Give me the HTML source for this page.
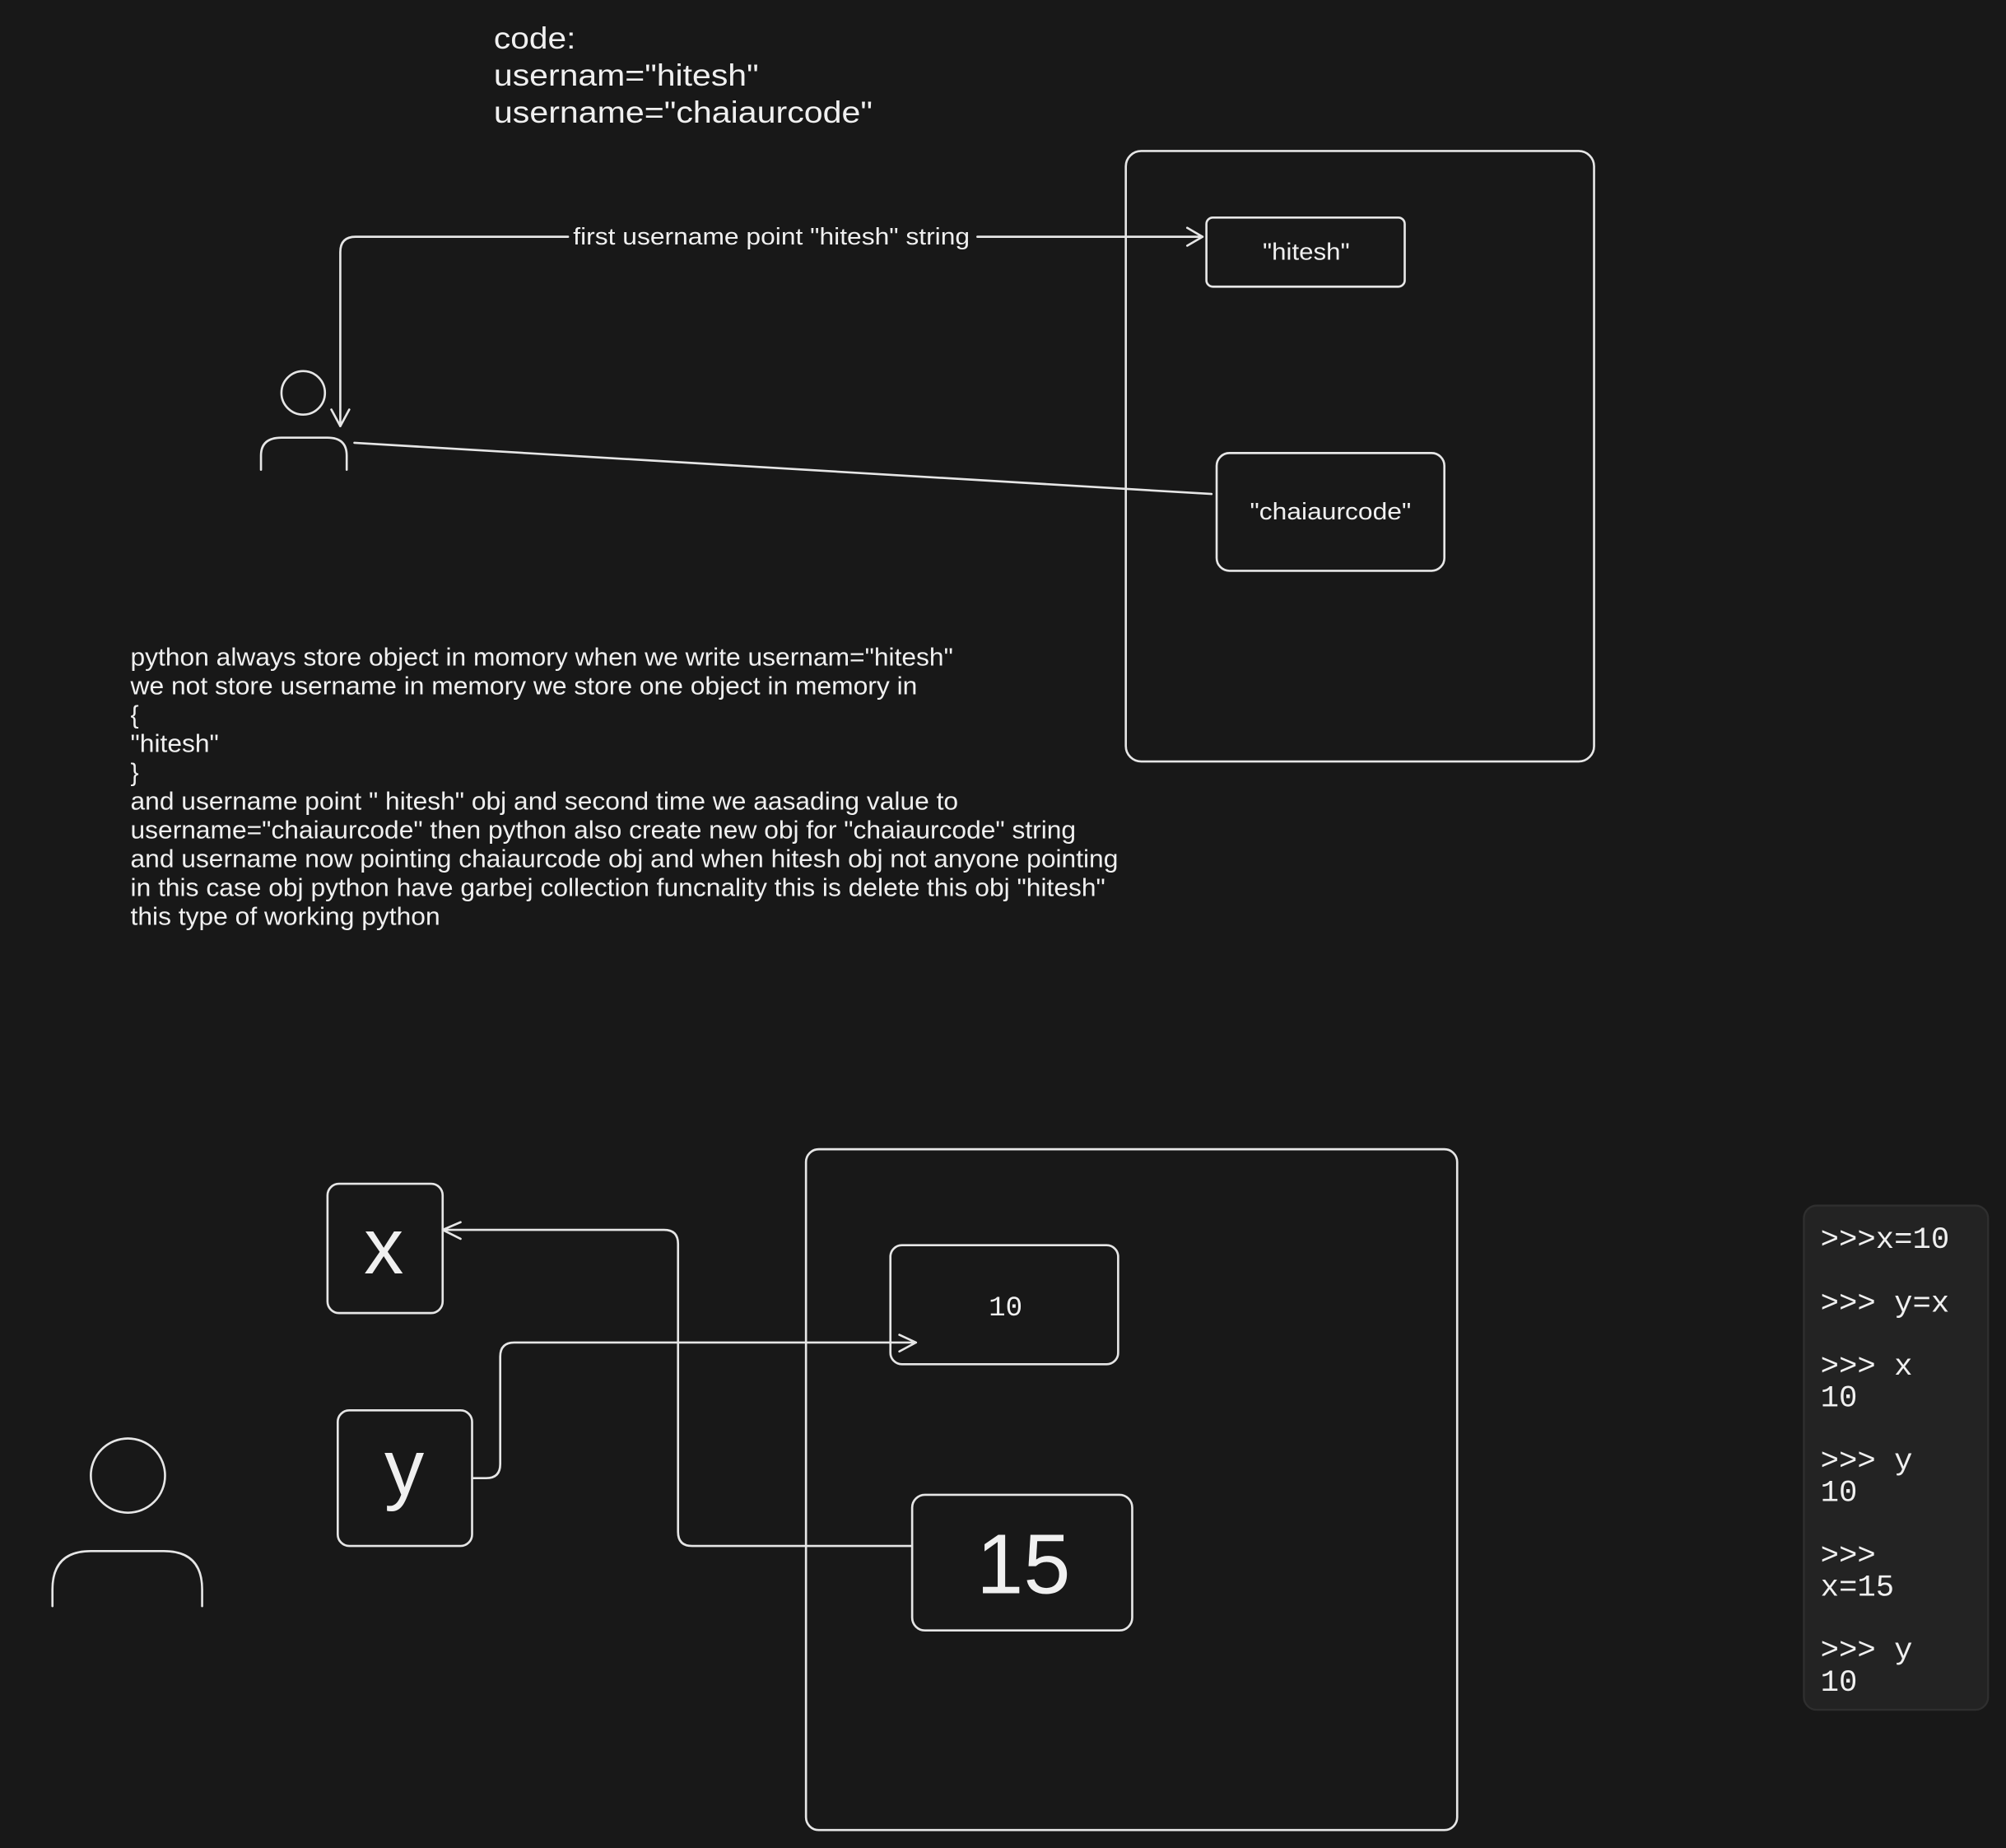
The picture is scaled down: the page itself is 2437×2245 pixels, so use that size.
<!DOCTYPE html>
<html><head><meta charset="utf-8"><style>
html,body{margin:0;padding:0;background:#181818;}
svg{display:block;}
</style></head><body>
<svg width="2437" height="2245" viewBox="0 0 1568 1444" preserveAspectRatio="none" xmlns="http://www.w3.org/2000/svg">
<rect width="1568" height="1444" fill="#181818"/>
<g fill="none" stroke="#e6e6e6" stroke-width="1.7" stroke-linecap="round" stroke-linejoin="round">
<rect x="880" y="118" width="366" height="477" rx="12"/>
<rect x="943" y="170" width="155" height="54" rx="5"/>
<rect x="951" y="354" width="178" height="92" rx="10"/>
<path d="M764,185 H940 M928,178 L940,185 L928,192"/>
<path d="M444,185 H278 Q266,185 266,197 V333 M259,320 L266,333 L273,320"/>
<circle cx="237" cy="307" r="17"/>
<path d="M204,367 V356 Q204,342 220,342 H256 Q271,342 271,356 V367"/>
<path d="M277,346 L947,386"/>
<rect x="630" y="898" width="509" height="532" rx="10"/>
<rect x="256" y="925" width="90" height="101" rx="9"/>
<rect x="264" y="1102" width="105" height="106" rx="9"/>
<rect x="696" y="973" width="178" height="93" rx="9"/>
<rect x="713" y="1168" width="172" height="106" rx="10"/>
<path d="M370,1155 H380 Q391,1155 391,1144 V1060 Q391,1049 402,1049 H716 M703,1043 L716,1049 L703,1056"/>
<path d="M712,1208 H541 Q530,1208 530,1197 V972 Q530,961 519,961 H346 M360,955 L346,961 L360,968"/>
<circle cx="100" cy="1153" r="29"/>
<path d="M41,1255 V1242 Q41,1212 71,1212 H128 Q158,1212 158,1242 V1255"/>
</g>
<g fill="#f0f0f0" font-family="Liberation Sans, sans-serif" lengthAdjust="spacingAndGlyphs">
<text x="386" y="38" font-size="24" textLength="64" lengthAdjust="spacingAndGlyphs">code:</text>
<text x="386" y="67" font-size="24" textLength="207" lengthAdjust="spacingAndGlyphs">usernam="hitesh"</text>
<text x="386" y="96" font-size="24" textLength="296" lengthAdjust="spacingAndGlyphs">username="chaiaurcode"</text>
<text x="448" y="191" font-size="18.5" textLength="310" lengthAdjust="spacingAndGlyphs">first username point "hitesh" string</text>
<text x="987" y="203" font-size="18.5" textLength="68" lengthAdjust="spacingAndGlyphs">"hitesh"</text>
<text x="977" y="406" font-size="18.5" textLength="126" lengthAdjust="spacingAndGlyphs">"chaiaurcode"</text>
<g font-size="19.5">
<text x="102" y="520" textLength="643" lengthAdjust="spacingAndGlyphs">python always store object in momory when we write usernam="hitesh"</text>
<text x="102" y="542.5" textLength="615" lengthAdjust="spacingAndGlyphs">we not store username in memory we store one object in memory in</text>
<text x="102" y="565">{</text>
<text x="102" y="587.5" textLength="69" lengthAdjust="spacingAndGlyphs">"hitesh"</text>
<text x="102" y="610">}</text>
<text x="102" y="632.5" textLength="647" lengthAdjust="spacingAndGlyphs">and username point " hitesh" obj and second time we aasading value to</text>
<text x="102" y="655" textLength="739" lengthAdjust="spacingAndGlyphs">username="chaiaurcode" then python also create new obj for "chaiaurcode" string</text>
<text x="102" y="677.5" textLength="772" lengthAdjust="spacingAndGlyphs">and username now pointing chaiaurcode obj and when hitesh obj not anyone pointing</text>
<text x="102" y="700" textLength="762" lengthAdjust="spacingAndGlyphs">in this case obj python have garbej collection funcnality this is delete this obj "hitesh"</text>
<text x="102" y="722.5" textLength="242" lengthAdjust="spacingAndGlyphs">this type of working python</text>
</g>
<text x="300" y="995" font-size="62" text-anchor="middle">x</text>
<text x="316" y="1168" font-size="62" text-anchor="middle">y</text>
<text x="786" y="1028" font-size="22" text-anchor="middle" font-family="Liberation Mono, monospace">10</text>
<text x="800" y="1245" font-size="66" text-anchor="middle">15</text>
</g>
<rect x="1410" y="942" width="144" height="394" rx="10" fill="#232323" stroke="#2f2f2f" stroke-width="1.5"/>
<g fill="#f0f0f0" font-family="Liberation Mono, DejaVu Sans Mono, monospace" font-size="24">
<text x="1423" y="975">&gt;&gt;&gt;x=10</text>
<text x="1423" y="1025">&gt;&gt;&gt; y=x</text>
<text x="1423" y="1074">&gt;&gt;&gt; x</text>
<text x="1423" y="1099">10</text>
<text x="1423" y="1148">&gt;&gt;&gt; y</text>
<text x="1423" y="1173">10</text>
<text x="1423" y="1222">&gt;&gt;&gt;</text>
<text x="1423" y="1247">x=15</text>
<text x="1423" y="1296">&gt;&gt;&gt; y</text>
<text x="1423" y="1321">10</text>
</g>
</svg>
</body></html>
